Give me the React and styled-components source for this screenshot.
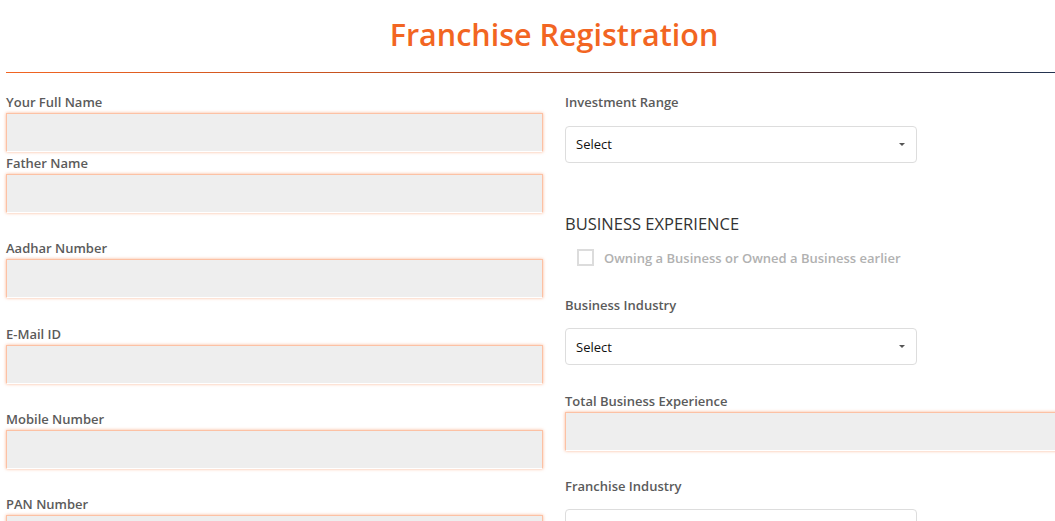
import React from "react";
import styled, { createGlobalStyle } from "styled-components";

const GlobalStyle = createGlobalStyle`
  html, body {
    margin: 0;
    padding: 0;
    overflow: hidden;
    background: #fff;
    font-family: "Open Sans", "Liberation Sans", sans-serif;
  }
`;

const Page = styled.div`
  width: 1096px;
  margin-left: 6px;
`;

const Title = styled.h1`
  margin: 16px 0 0;
  text-align: center;
  font-size: 30.5px;
  line-height: 36px;
  font-weight: 600;
  color: #f26522;
`;

const Rule = styled.hr`
  margin: 20px 0 0;
  border: 0;
  height: 1px;
  background: linear-gradient(to right, #f26522 0%, #c0501f 35%, #4a2f35 75%, #1b3557 100%);
`;

const Grid = styled.div`
  display: grid;
  grid-template-columns: 537px 537px;
  column-gap: 22px;
  padding-top: 19px;
  align-items: start;
`;

const Column = styled.div`
  display: flex;
  flex-direction: column;
`;

const Group = styled.div`
  display: flex;
  flex-direction: column;
  margin-bottom: ${(p) => (p.$tight ? "1px" : "25.33px")};
`;

const Label = styled.label`
  display: block;
  padding-top: 1px;
  font-size: 13px;
  line-height: 18px;
  font-weight: 600;
  color: #5b5b5b;
  margin-bottom: ${(p) => (p.$select ? "14.5px" : "2px")};
`;

const Input = styled.div`
  box-sizing: border-box;
  width: 537px;
  height: 39px;
  background: #eeeeee;
  border: 1px solid #fcc1a4;
  border-bottom-color: #ffffff;
  box-shadow: 0 0 3px rgba(246, 120, 60, 0.55);
`;

const SelectBox = styled.div`
  box-sizing: border-box;
  width: 352px;
  height: 37px;
  border: 1px solid #dddddd;
  border-radius: 4px;
  background: #fff;
  display: flex;
  align-items: center;
  justify-content: space-between;
  padding: 0 11px 0 10px;
  font-size: 13px;
  color: #111;
`;

const Caret = styled.span`
  width: 0;
  height: 0;
  border-left: 3px solid transparent;
  border-right: 3px solid transparent;
  border-top: 3px solid #555;
`;

const Heading = styled.h3`
  margin: 26px 0 0;
  font-size: 16.5px;
  line-height: 20px;
  font-weight: 400;
  color: #333;
  text-transform: uppercase;
`;

const CheckRow = styled.label`
  display: flex;
  align-items: center;
  gap: 10px;
  margin: 15px 0 28px 12px;
  font-size: 13px;
  font-weight: 600;
  color: #b1b1b1;
`;

const Box = styled.span`
  box-sizing: border-box;
  width: 17px;
  height: 17px;
  border: 2px solid #dcdcdc;
  background: #fff;
`;

const Select = () => (
  <SelectBox>
    <span>Select</span>
    <Caret />
  </SelectBox>
);

export default function App() {
  return (
    <>
      <GlobalStyle />
      <Page>
        <Title>Franchise Registration</Title>
        <Rule />
        <Grid>
          <Column>
            <Group $tight>
              <Label>Your Full Name</Label>
              <Input />
            </Group>
            <Group>
              <Label>Father Name</Label>
              <Input />
            </Group>
            <Group>
              <Label>Aadhar Number</Label>
              <Input />
            </Group>
            <Group>
              <Label>E-Mail ID</Label>
              <Input />
            </Group>
            <Group>
              <Label>Mobile Number</Label>
              <Input />
            </Group>
            <Group>
              <Label>PAN Number</Label>
              <Input />
            </Group>
          </Column>
          <Column>
            <Group>
              <Label $select>Investment Range</Label>
              <Select />
            </Group>
            <Heading>Business Experience</Heading>
            <CheckRow>
              <Box />
              Owning a Business or Owned a Business earlier
            </CheckRow>
            <Group>
              <Label $select>Business Industry</Label>
              <Select />
            </Group>
            <Group>
              <Label>Total Business Experience</Label>
              <Input />
            </Group>
            <Group>
              <Label $select>Franchise Industry</Label>
              <Select />
            </Group>
          </Column>
        </Grid>
      </Page>
    </>
  );
}
